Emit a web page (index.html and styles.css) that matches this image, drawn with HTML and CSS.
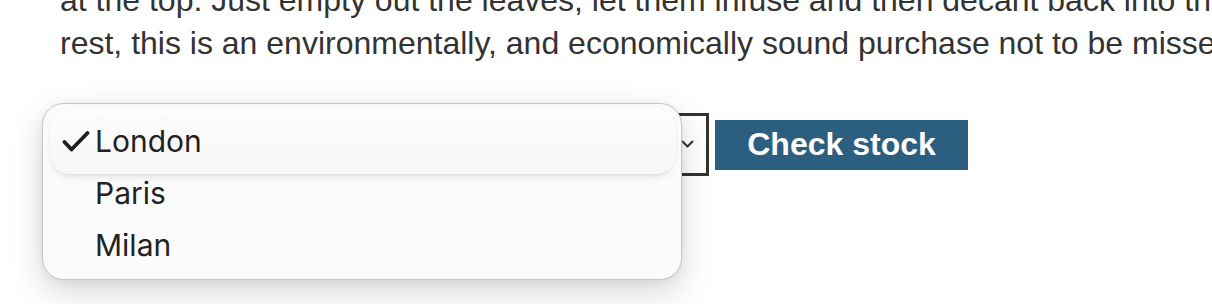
FILE: index.html
```html
<!DOCTYPE html>
<html lang="en">
<head>
    <meta charset="UTF-8">
    <meta name="viewport" content="width=device-width, initial-scale=1.0">
    <title>Loose Leaf Tea Tin</title>
    <link rel="stylesheet" href="styles.css">
</head>
<body>

<div class="page">
    <!-- Product description (page is scrolled, first line is cut off) -->
    <p class="intro">
        <span class="line">at the top. Just empty out the leaves, let them infuse and then decant back into the tin. For the</span>
        <span class="line">rest, this is an environmentally, and economically sound purchase not to be missed.</span>
    </p>

    <!-- Stock check form -->
    <div class="stock-form">
        <div class="select">
            <svg class="chevron" width="13" height="9" viewBox="0 0 13 9">
                <path d="M1.5 1.5 L6.5 6.5 L11.5 1.5" fill="none" stroke="#333" stroke-width="2" stroke-linecap="round" stroke-linejoin="round"/>
            </svg>
        </div>
        <button class="check-btn">Check stock</button>

        <!-- Open dropdown menu -->
        <div class="menu">
            <div class="option active">
                <span class="reflect" aria-hidden="true">London</span>
                <svg class="tick" width="28" height="21" viewBox="0 0 28 21">
                    <path d="M2.5 11 L9.5 18.5 L25.5 2" fill="none" stroke="#1e1e1e" stroke-width="3.8" stroke-linecap="round" stroke-linejoin="round"/>
                </svg>
                <span class="label">London</span>
            </div>
            <div class="option"><span class="label">Paris</span></div>
            <div class="option"><span class="label">Milan</span></div>
        </div>
    </div>
</div>

</body>
</html>
```

FILE: styles.css
```css
/* Base */
body {
    margin: 0;
    background-color: #fff;
    font-family: "Liberation Sans", Arial, sans-serif;
    color: #333;
}

.page {
    padding: 1px 0 0 60px;
    margin-top: -22px;
    height: 330px;
    overflow: hidden;
}

/* Description text */
.intro {
    margin: 0;
    font-size: 32px;
    line-height: 43px;
    overflow: hidden;
}

.intro .line {
    display: block;
    white-space: nowrap;
}

/* Form row */
.stock-form {
    position: relative;
    display: flex;
    align-items: center;
    gap: 6px;
    margin-top: 48px;
}

.select {
    box-sizing: border-box;
    width: 649px;
    height: 63px;
    border: 3px solid #333;
    background-color: #fff;
    display: flex;
    align-items: center;
    justify-content: flex-end;
    padding-right: 12px;
}

.check-btn {
    width: 253px;
    height: 50px;
    padding: 0;
    border: none;
    background-color: #2c5e80;
    color: #fff;
    font-family: "Liberation Sans", Arial, sans-serif;
    font-size: 32px;
    font-weight: bold;
    cursor: pointer;
}

/* Dropdown menu */
.menu {
    position: absolute;
    left: -18px;
    top: -10px;
    box-sizing: border-box;
    width: 640px;
    height: 177px;
    padding: 11px 0 8px;
    background-color: #fbfbfb;
    border: 1px solid #c6c6c6;
    border-radius: 22px;
    box-shadow: 0 12px 34px rgba(0, 0, 0, 0.16), 0 2px 8px rgba(0, 0, 0, 0.06);
    font-family: Inter, "Noto Sans", sans-serif;
    color: #222;
}

.option {
    position: relative;
    height: 52px;
    line-height: 52px;
    padding-left: 52px;
    font-size: 30px;
}

.option .label {
    position: relative;
}

/* Highlighted item */
.option.active::before {
    content: "";
    position: absolute;
    left: 7px;
    right: 5px;
    top: -7px;
    bottom: -7px;
    border-radius: 20px;
    background: linear-gradient(#fdfdfd, #f6f6f6);
    box-shadow: 0 5px 7px -3px rgba(0, 0, 0, 0.13), 0 0 3px rgba(0, 0, 0, 0.05);
}

.reflect {
    position: absolute;
    left: 52px;
    top: -33px;
    transform: scaleY(-1);
    color: #000;
    opacity: 0.06;
    filter: blur(1px);
    clip-path: inset(0 0 68% 0);
}

.tick {
    position: absolute;
    left: 19px;
    top: 16px;
}
```
